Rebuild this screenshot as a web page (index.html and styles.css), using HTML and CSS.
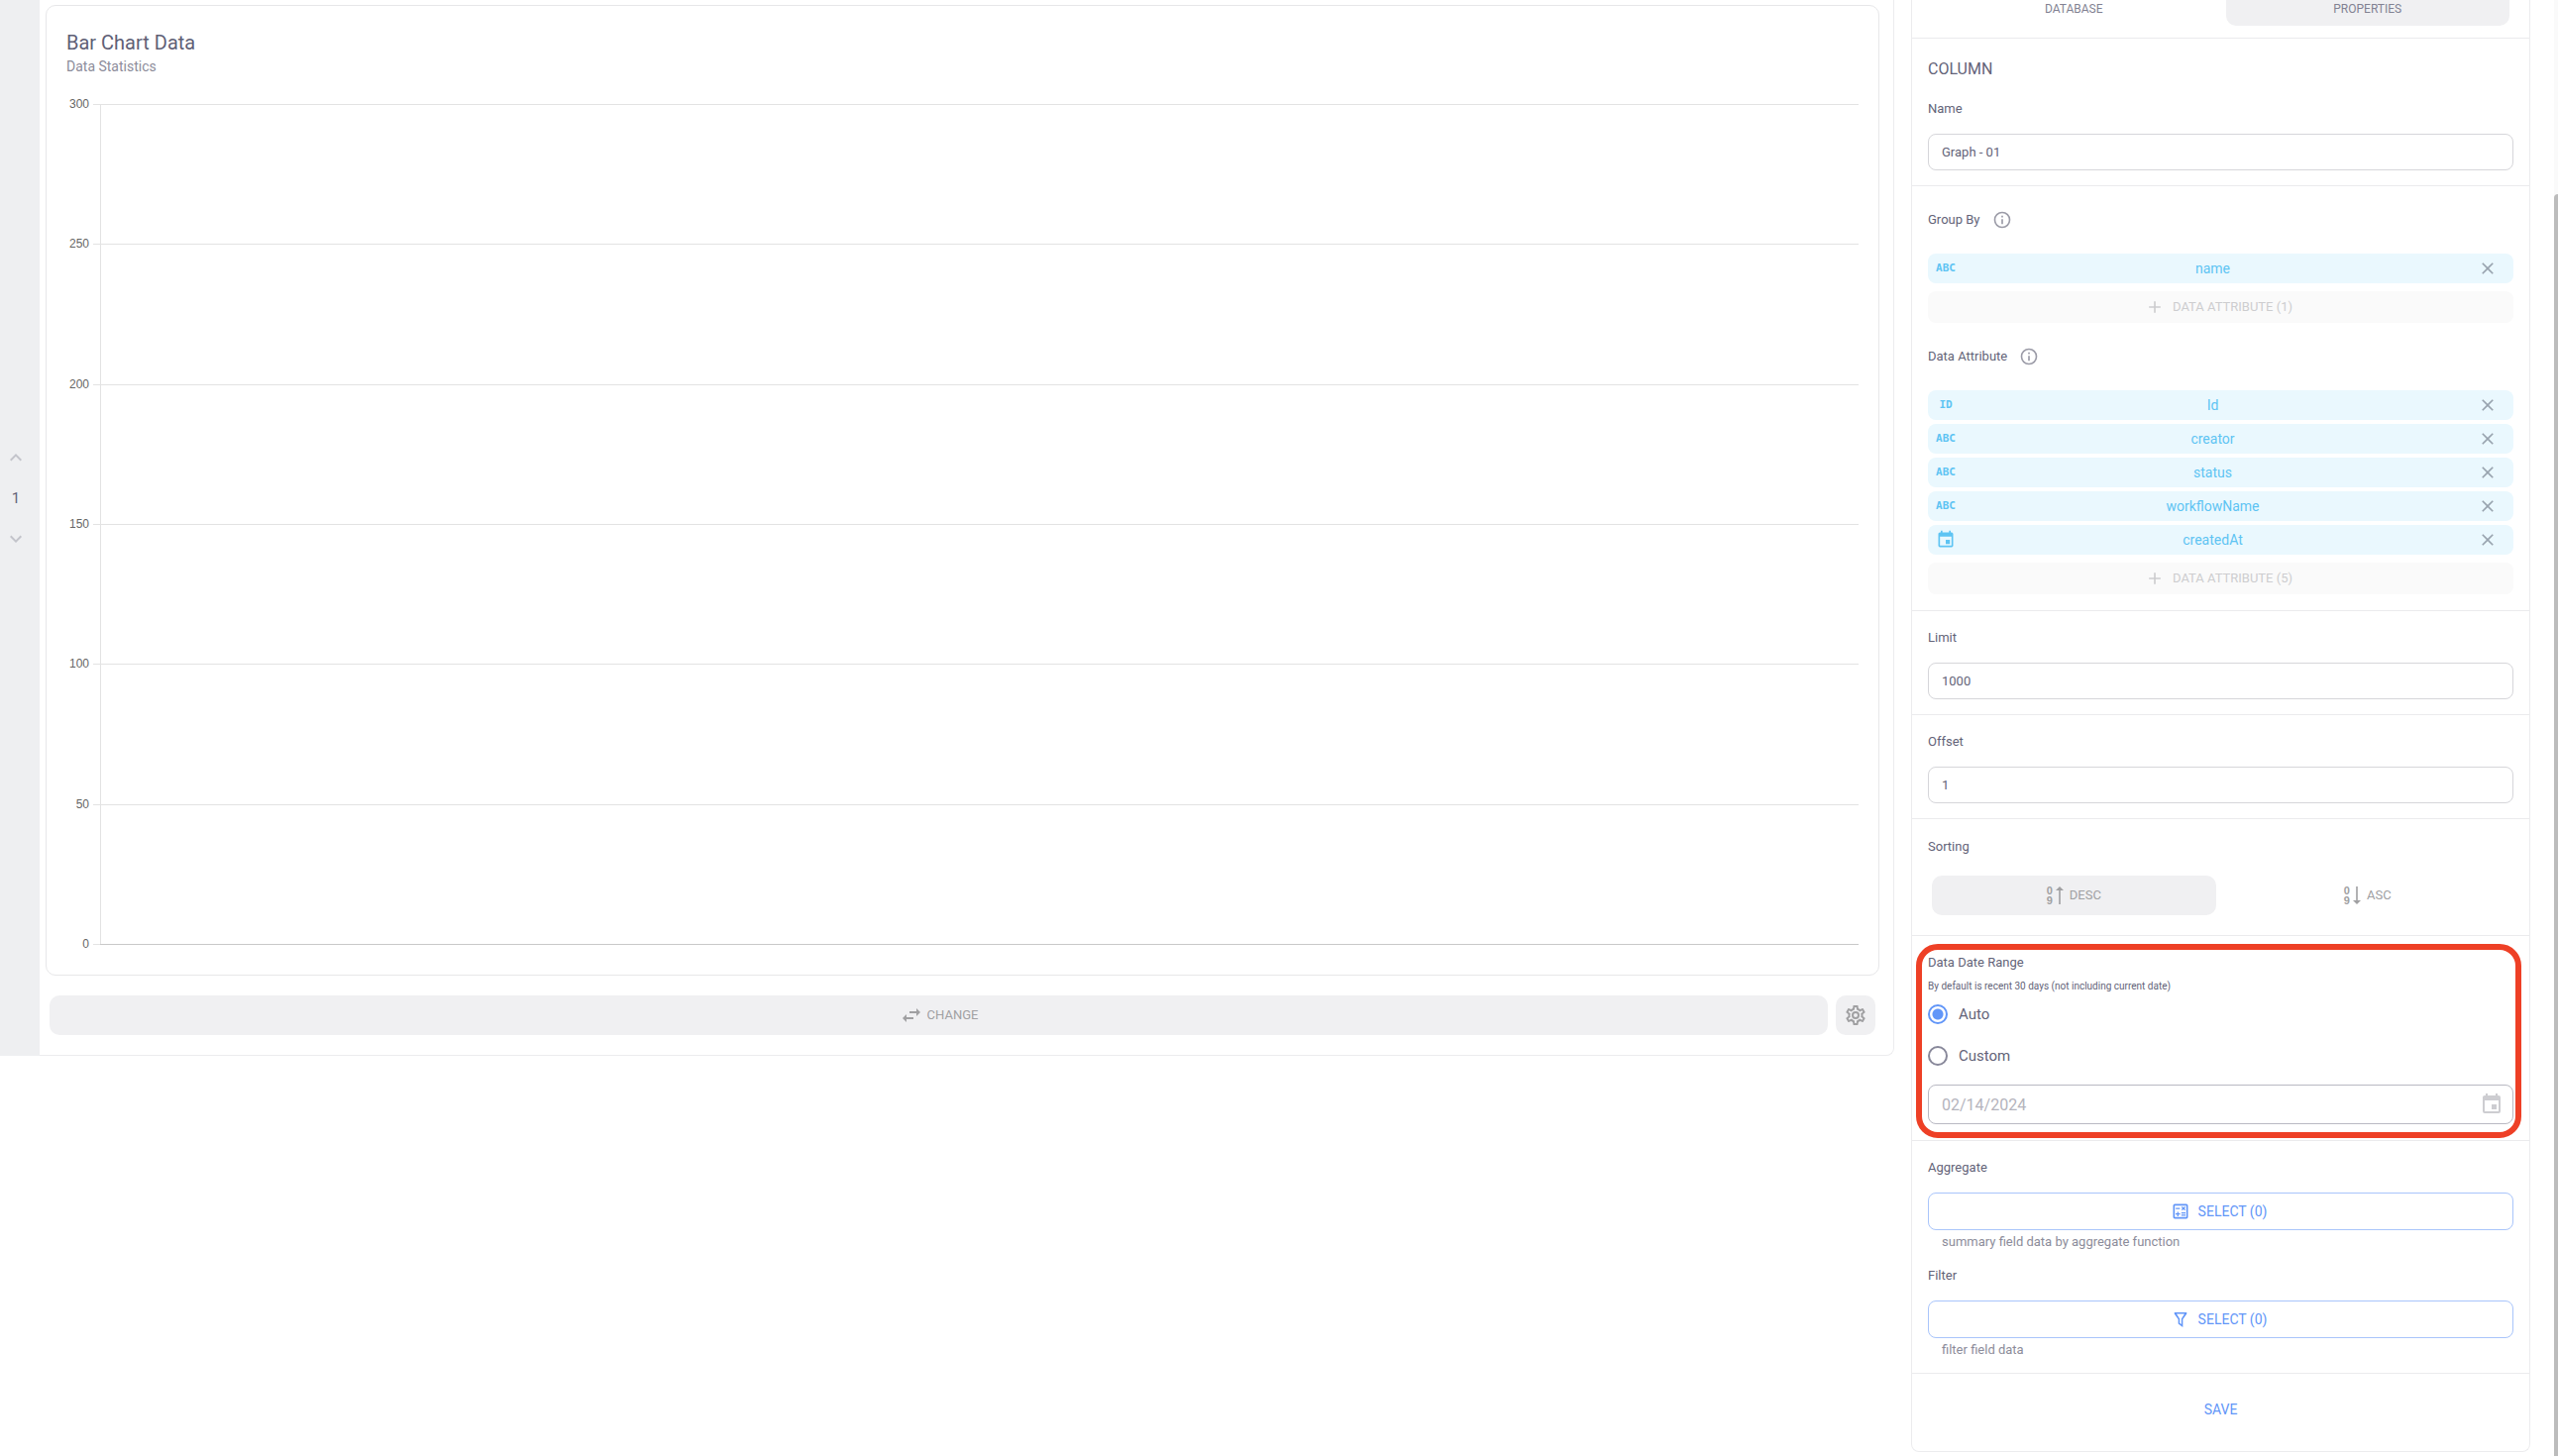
FILE: index.html
```html
<!DOCTYPE html>
<html lang="en">
<head>
<meta charset="utf-8">
<title>Bar Chart Data</title>
<link rel="stylesheet" href="styles.css">
</head>
<body>
<svg class="sprite" aria-hidden="true">
  <symbol id="i-close" viewBox="0 0 24 24"><path d="M19 6.41 17.59 5 12 10.59 6.41 5 5 6.41 10.59 12 5 17.59 6.41 19 12 13.41 17.59 19 19 17.59 13.41 12z"/></symbol>
  <symbol id="i-plus" viewBox="0 0 24 24"><path d="M19 13h-6v6h-2v-6H5v-2h6V5h2v6h6z"/></symbol>
  <symbol id="i-up" viewBox="0 0 24 24"><path d="M7.41 15.41 12 10.83l4.59 4.58L18 14l-6-6-6 6z"/></symbol>
  <symbol id="i-down" viewBox="0 0 24 24"><path d="M7.41 8.59 12 13.17l4.59-4.58L18 10l-6 6-6-6z"/></symbol>
  <symbol id="i-info" viewBox="0 0 24 24"><path d="M11 9h2V7h-2m1 13c-4.41 0-8-3.59-8-8s3.59-8 8-8 8 3.59 8 8-3.59 8-8 8m0-18A10 10 0 0 0 2 12a10 10 0 0 0 10 10 10 10 0 0 0 10-10A10 10 0 0 0 12 2m-1 15h2v-6h-2z"/></symbol>
  <symbol id="i-calendar" viewBox="0 0 24 24"><path d="M19 19H5V8h14m-3-7v2H8V1H6v2H5c-1.11 0-2 .89-2 2v14a2 2 0 0 0 2 2h14a2 2 0 0 0 2-2V5a2 2 0 0 0-2-2h-1V1m-1 11h-5v5h5z"/></symbol>
  <symbol id="i-swap" viewBox="0 0 24 24"><path d="m21 9-4-4v3h-7v2h7v3M7 11l-4 4 4 4v-3h7v-2H7z"/></symbol>
  <symbol id="i-gear" viewBox="0 0 24 24"><path d="M12 8a4 4 0 0 1 4 4 4 4 0 0 1-4 4 4 4 0 0 1-4-4 4 4 0 0 1 4-4m0 2a2 2 0 0 0-2 2 2 2 0 0 0 2 2 2 2 0 0 0 2-2 2 2 0 0 0-2-2m-2 12c-.25 0-.46-.18-.5-.42l-.37-2.65c-.63-.25-1.17-.59-1.69-.99l-2.49 1.01c-.22.08-.49 0-.61-.22l-2-3.46a.493.493 0 0 1 .12-.64l2.11-1.66L4.5 12l.07-1-2.11-1.63a.493.493 0 0 1-.12-.64l2-3.46c.12-.22.39-.31.61-.22l2.49 1c.52-.39 1.06-.73 1.69-.98l.37-2.65c.04-.24.25-.42.5-.42h4c.25 0 .46.18.5.42l.37 2.65c.63.25 1.17.59 1.69.98l2.49-1c.22-.09.49 0 .61.22l2 3.46c.13.22.07.49-.12.64L19.43 11l.07 1-.07 1 2.11 1.63c.19.15.25.42.12.64l-2 3.46c-.12.22-.39.31-.61.22l-2.49-1c-.52.39-1.06.73-1.69.98l-.37 2.65c-.04.24-.25.42-.5.42zm1.25-18-.37 2.61c-1.2.25-2.26.89-3.03 1.78L5.44 7.35l-.75 1.3L6.8 10.2a5.55 5.55 0 0 0 0 3.6l-2.12 1.56.75 1.3 2.43-1.04c.77.88 1.82 1.52 3.01 1.76l.37 2.62h1.52l.37-2.61c1.19-.25 2.24-.89 3.01-1.77l2.43 1.04.75-1.3-2.12-1.55c.4-1.17.4-2.44 0-3.61l2.11-1.55-.75-1.3-2.41 1.04a5.42 5.42 0 0 0-3.03-1.77L12.75 4z"/></symbol>
  <symbol id="i-calc" viewBox="0 0 24 24"><path d="M19 3H5a2 2 0 0 0-2 2v14a2 2 0 0 0 2 2h14a2 2 0 0 0 2-2V5a2 2 0 0 0-2-2m0 16H5V5h14zM6.2 7.7h5v1.5h-5zm6.8 8.1h5v1.5h-5zm0-2.6h5v1.5h-5zM8 18h1.5v-2h2v-1.5h-2v-2H8v2H6V16h2zm6.1-7.1 1.4-1.4 1.4 1.4 1.1-1-1.4-1.4L18 7.1 16.9 6l-1.4 1.4L14.1 6 13 7.1l1.4 1.4L13 9.9z"/></symbol>
  <symbol id="i-filter" viewBox="0 0 24 24"><path d="M4.500 3.500h15v1.800L14.800 12v9.500l-5.600-4V12L4.500 5.300zm2.700 1.900 3.800 5.900v5.200l2 1.500v-6.700l3.800-5.900z"/></symbol>
  <symbol id="i-arrow-up" viewBox="0 0 8 20"><path d="M3.200 19V5H0l4-4 4 4H4.800v14z"/></symbol>
  <symbol id="i-arrow-down" viewBox="0 0 8 20"><path d="M3.200 1v14H0l4 4 4-4H4.800V1z"/></symbol>
</svg>

<div class="page">
  <main class="board">
    <nav class="pager" aria-label="Pages">
      <button class="icon-btn" type="button" aria-label="Previous page"><svg class="i24"><use href="#i-up"/></svg></button>
      <span class="pager-num">1</span>
      <button class="icon-btn" type="button" aria-label="Next page"><svg class="i24"><use href="#i-down"/></svg></button>
    </nav>
    <div class="board-body">
      <section class="card">
        <h1 class="card-title">Bar Chart Data</h1>
        <p class="card-sub">Data Statistics</p>
        <div class="chart">
          <div class="band"><span class="tick-label">300</span><span class="tick"></span><span class="plot"></span></div>
          <div class="band"><span class="tick-label">250</span><span class="tick"></span><span class="plot"></span></div>
          <div class="band"><span class="tick-label">200</span><span class="tick"></span><span class="plot"></span></div>
          <div class="band"><span class="tick-label">150</span><span class="tick"></span><span class="plot"></span></div>
          <div class="band"><span class="tick-label">100</span><span class="tick"></span><span class="plot"></span></div>
          <div class="band"><span class="tick-label">50</span><span class="tick"></span><span class="plot"></span></div>
          <div class="band band-zero"><span class="tick-label">0</span><span class="tick"></span><span class="plot"></span></div>
        </div>
      </section>
      <div class="actions">
        <button class="btn-grey btn-change" type="button"><svg class="i24"><use href="#i-swap"/></svg>CHANGE</button>
        <button class="btn-grey btn-gear" type="button" aria-label="Settings"><svg class="i24"><use href="#i-gear"/></svg></button>
      </div>
    </div>
  </main>

  <aside class="panel">
    <div class="tabs">
      <button class="tab" type="button">DATABASE</button>
      <button class="tab tab-on" type="button">PROPERTIES</button>
    </div>

    <section class="sec sec-column">
      <h2 class="sec-title">COLUMN</h2>
      <label class="lbl" for="name">Name</label>
      <input class="field" id="name" type="text" value="Graph - 01">
    </section>

    <section class="sec sec-attrs">
      <div class="lbl lbl-info">Group By <svg class="i20"><use href="#i-info"/></svg></div>
      <div class="chips">
        <div class="chip"><span class="kind">ABC</span><span class="chip-name">name</span><button class="icon-btn" type="button" aria-label="Remove name"><svg class="i20"><use href="#i-close"/></svg></button></div>
      </div>
      <button class="add" type="button" disabled><svg class="i20"><use href="#i-plus"/></svg>DATA ATTRIBUTE (1)</button>
      <div class="lbl lbl-info lbl-second">Data Attribute <svg class="i20"><use href="#i-info"/></svg></div>
      <div class="chips">
        <div class="chip"><span class="kind">ID</span><span class="chip-name">Id</span><button class="icon-btn" type="button" aria-label="Remove Id"><svg class="i20"><use href="#i-close"/></svg></button></div>
        <div class="chip"><span class="kind">ABC</span><span class="chip-name">creator</span><button class="icon-btn" type="button" aria-label="Remove creator"><svg class="i20"><use href="#i-close"/></svg></button></div>
        <div class="chip"><span class="kind">ABC</span><span class="chip-name">status</span><button class="icon-btn" type="button" aria-label="Remove status"><svg class="i20"><use href="#i-close"/></svg></button></div>
        <div class="chip"><span class="kind">ABC</span><span class="chip-name">workflowName</span><button class="icon-btn" type="button" aria-label="Remove workflowName"><svg class="i20"><use href="#i-close"/></svg></button></div>
        <div class="chip"><span class="kind"><svg class="i20"><use href="#i-calendar"/></svg></span><span class="chip-name">createdAt</span><button class="icon-btn" type="button" aria-label="Remove createdAt"><svg class="i20"><use href="#i-close"/></svg></button></div>
      </div>
      <button class="add" type="button" disabled><svg class="i20"><use href="#i-plus"/></svg>DATA ATTRIBUTE (5)</button>
    </section>

    <section class="sec sec-field">
      <label class="lbl" for="limit">Limit</label>
      <input class="field" id="limit" type="text" value="1000">
    </section>

    <section class="sec sec-field">
      <label class="lbl" for="offset">Offset</label>
      <input class="field" id="offset" type="text" value="1">
    </section>

    <section class="sec sec-sort">
      <div class="lbl">Sorting</div>
      <div class="sort">
        <button class="btn-grey" type="button"><span class="digits"><span>0</span><span>9</span></span><svg class="arrow"><use href="#i-arrow-up"/></svg>DESC</button>
        <button class="btn-grey btn-clear" type="button"><span class="digits"><span>0</span><span>9</span></span><svg class="arrow"><use href="#i-arrow-down"/></svg>ASC</button>
      </div>
    </section>

    <section class="sec sec-range">
      <div class="highlight"></div>
      <div class="lbl">Data Date Range</div>
      <p class="note">By default is recent 30 days (not including current date)</p>
      <label class="choice"><input class="radio" type="radio" name="range" checked>Auto</label>
      <label class="choice"><input class="radio" type="radio" name="range">Custom</label>
      <div class="date">
        <input class="date-input" type="text" value="02/14/2024" aria-label="Date" disabled>
        <svg class="i24"><use href="#i-calendar"/></svg>
      </div>
    </section>

    <section class="sec sec-select">
      <div class="lbl">Aggregate</div>
      <button class="btn-outline" type="button"><svg class="i20"><use href="#i-calc"/></svg>SELECT (0)</button>
      <p class="help">summary field data by aggregate function</p>
      <div class="lbl">Filter</div>
      <button class="btn-outline" type="button"><svg class="i20"><use href="#i-filter"/></svg>SELECT (0)</button>
      <p class="help">filter field data</p>
    </section>

    <section class="sec sec-save">
      <button class="btn-save" type="button">SAVE</button>
    </section>
  </aside>
  <div class="scroll"><div class="thumb"></div></div>
</div>
</body>
</html>
```

FILE: styles.css
```css
* {
  box-sizing: border-box;
}

body {
  margin: 0;
  background: #fff;
  color: #636378;
  font: 13px/16px Roboto, "Liberation Sans", sans-serif;
}

h1,
h2,
p {
  margin: 0;
  font-weight: 400;
}

button,
input {
  margin: 0;
  font: inherit;
  color: inherit;
}

button {
  display: flex;
  align-items: center;
  justify-content: center;
  padding: 0;
  border: 0;
  background: none;
}

svg {
  flex: none;
  fill: currentColor;
}

.sprite {
  position: absolute;
  width: 0;
  height: 0;
}

.i20 {
  width: 20px;
  height: 20px;
}

.i24 {
  width: 24px;
  height: 24px;
}

.page {
  display: flex;
  align-items: flex-start;
  min-height: 100vh;
}

/* Left: report page with its chart */
.board {
  flex: 1;
  display: flex;
  border: 1px solid #ececee;
  border-width: 0 1px 1px 0;
  border-radius: 0 0 8px 0;
}

.pager {
  width: 40px;
  padding: 450px 8px 0 0;
  margin-bottom: -1px;
  display: flex;
  flex-direction: column;
  align-items: center;
  gap: 20px;
  background: #eeeff1;
}

.pager .icon-btn {
  color: #c3c4cb;
}

.pager-num {
  font-size: 15px;
  line-height: 18px;
}

.board-body {
  flex: 1;
  padding: 5px 14px 20px 6px;
}

.card {
  padding: 27px 20px 30px;
  border: 1px solid #e7e7e9;
  border-radius: 10px;
}

.card-title {
  font-size: 20px;
  line-height: 20px;
  color: #5f5f76;
}

.card-sub {
  padding-top: 5px;
  font-size: 14px;
  line-height: 18px;
  color: #8c8c9a;
}

.chart {
  display: grid;
  grid-template-rows: repeat(6, 1fr) 1px;
  height: 849px;
  margin-top: 29px;
  font: 12px/16px "Liberation Sans", Arial, sans-serif;
  color: #666;
}

.band {
  display: grid;
  grid-template-columns: 24px 7px 1fr;
}

.tick-label {
  height: 16px;
  margin-top: -8px;
  padding-right: 1px;
  text-align: right;
}

.tick {
  margin-left: 3px;
  width: 8px;
  border-top: 1px solid #e3e3e3;
}

.plot {
  margin-left: 3px;
  border: 1px solid #e3e3e3;
  border-width: 1px 0 0 1px;
}

.band-zero {
  grid-template-rows: 1px;
  height: 1px;
}

.band-zero .plot {
  border-color: #c9c9c9;
}

.actions {
  display: flex;
  gap: 8px;
  padding: 20px 4px 0;
}

.btn-grey {
  height: 40px;
  border-radius: 10px;
  background: #f0f0f2;
  color: #a0a0a2;
}

.btn-change {
  flex: 1;
  gap: 4px;
}

.btn-gear {
  width: 40px;
}

/* Right: properties panel */
.panel {
  width: 625px;
  margin-left: 17px;
  border: 1px solid #ececee;
  border-top: 0;
  border-radius: 0 0 8px 8px;
}

.tabs {
  display: grid;
  grid-template-columns: 1fr 1fr;
  gap: 10px;
  padding: 0 20px 12px;
}

.tab {
  height: 26px;
  padding-bottom: 8px;
  font-size: 12px;
  color: #828292;
}

.tab-on {
  border-radius: 0 0 10px 10px;
  background: #f0f0f2;
}

.sec {
  display: flex;
  flex-direction: column;
  padding: 0 16px;
  border-top: 1px solid #ebebed;
}

.sec-column {
  padding-top: 21px;
  padding-bottom: 15px;
}

.sec-title {
  padding-bottom: 22px;
  font-size: 16px;
  line-height: 20px;
}

.sec-column .lbl {
  padding-bottom: 17px;
}

.field {
  height: 37px;
  padding: 0 13px;
  border: 1px solid #d6d6da;
  border-radius: 8px;
  background: #fff;
}

.sec-attrs {
  padding-top: 24px;
  padding-bottom: 16px;
}

.lbl-info {
  display: flex;
  align-items: center;
  gap: 12px;
  height: 20px;
}

.lbl-info svg {
  color: #9b9ba7;
}

.lbl-second {
  margin-top: 24px;
}

.chips {
  display: flex;
  flex-direction: column;
  gap: 4px;
  padding: 24px 0 8px;
}

.chip {
  display: flex;
  align-items: center;
  height: 30px;
  padding: 0 16px 0 6px;
  border-radius: 8px;
  background: #eaf8fe;
  color: #5ec4f3;
  font-size: 14px;
}

.kind {
  display: flex;
  justify-content: center;
  width: 24px;
  font: bold 11px/16px "DejaVu Sans Mono", monospace;
}

.chip-name {
  flex: 1;
  padding-right: 10px;
  text-align: center;
}

.chip .icon-btn {
  color: #98a3ae;
}

.add {
  gap: 8px;
  height: 32px;
  border-radius: 8px;
  background: #fafafa;
  color: #cdcdcf;
}

.add svg,
.btn-outline svg {
  margin-left: -4px;
}

.sec-field {
  padding-top: 19px;
  padding-bottom: 15px;
}

.sec-field .lbl {
  padding-bottom: 17px;
}

.sec-sort {
  padding-top: 20px;
  padding-bottom: 20px;
}

.sort {
  display: grid;
  grid-template-columns: 1fr 1fr;
  gap: 10px;
  padding: 21px 4px 0;
}

.sort .btn-clear {
  background: none;
}

.digits {
  display: flex;
  flex-direction: column;
  font: bold 11px/10px "Liberation Sans", Arial, sans-serif;
}

.arrow {
  width: 8px;
  height: 20px;
  margin: 0 6px 0 3px;
}

.sec-range {
  position: relative;
  padding-top: 19px;
  padding-bottom: 16px;
}

.highlight {
  position: absolute;
  inset: 8px 8px 2px 4px;
  border: 6px solid #ee4026;
  border-radius: 22px;
  pointer-events: none;
}

.note {
  padding: 9px 0 0;
  font-size: 10px;
  line-height: 14px;
}

.choice {
  display: flex;
  align-items: center;
  gap: 11px;
  height: 42px;
  font-size: 15px;
}

.radio {
  appearance: none;
  width: 20px;
  height: 20px;
  border: 2px solid #88889a;
  border-radius: 50%;
}

.radio:checked {
  border-color: #6296f8;
  background: radial-gradient(circle, #6296f8 5px, transparent 6px);
}

.date {
  display: flex;
  align-items: center;
  height: 40px;
  margin-top: 8px;
  padding: 0 9px 0 13px;
  border: 1px solid #b9b9c3;
  border-radius: 8px;
  color: #cdcdd1;
}

.date-input {
  flex: 1;
  padding: 0;
  border: 0;
  background: none;
  color: #b4b4bd;
  font-size: 16px;
}

.sec-select {
  padding-top: 19px;
  padding-bottom: 15px;
}

.btn-outline {
  gap: 8px;
  height: 38px;
  margin-top: 17px;
  border: 1px solid #a9c5fb;
  border-radius: 8px;
  color: #6296f8;
  font-size: 14px;
}

.help {
  padding: 4px 14px 0;
  color: #8c8c9a;
}

.help + .lbl {
  margin-top: 18px;
}

.sec-save {
  padding-top: 16px;
  padding-bottom: 22px;
}

.btn-save {
  height: 40px;
  color: #6296f8;
  font-size: 14px;
}

/* Window scrollbar track */
.scroll {
  align-self: stretch;
  display: flex;
  width: 4px;
  margin-left: 24px;
  padding-top: 196px;
  background: #fafafa;
}

.thumb {
  flex: 1;
  border-radius: 4px 0 0 0;
  background: #bcbcbc;
}
```
